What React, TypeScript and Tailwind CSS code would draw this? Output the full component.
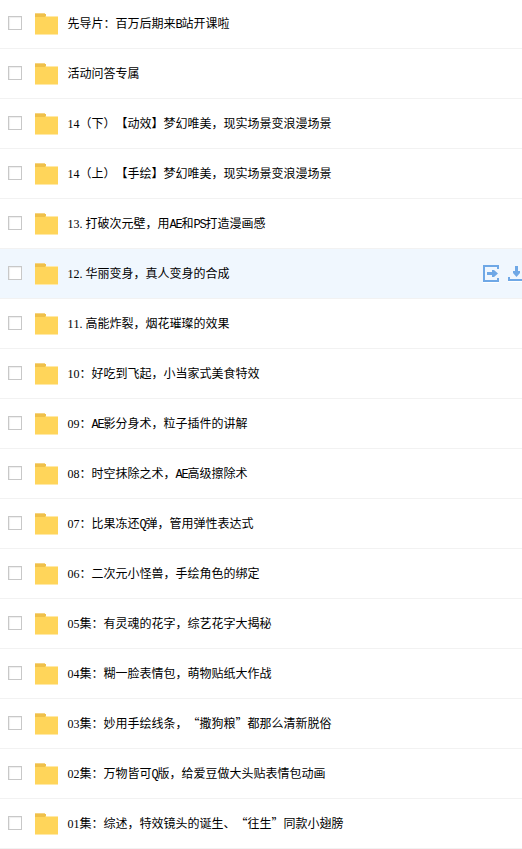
import clsx from 'clsx'

const files = [
    '先导片：百万后期来B站开课啦',
    '活动问答专属',
    '14（下）【动效】梦幻唯美，现实场景变浪漫场景',
    '14（上）【手绘】梦幻唯美，现实场景变浪漫场景',
    '13.打破次元壁，用AE和PS打造漫画感',
    '12.华丽变身，真人变身的合成',
    '11.高能炸裂，烟花璀璨的效果',
    '10：好吃到飞起，小当家式美食特效',
    '09：AE影分身术，粒子插件的讲解',
    '08：时空抹除之术，AE高级擦除术',
    '07：比果冻还Q弹，管用弹性表达式',
    '06：二次元小怪兽，手绘角色的绑定',
    '05集：有灵魂的花字，综艺花字大揭秘',
    '04集：糊一脸表情包，萌物贴纸大作战',
    '03集：妙用手绘线条，“撒狗粮”都那么清新脱俗',
    '02集：万物皆可Q版，给爱豆做大头贴表情包动画',
    '01集：综述，特效镜头的诞生、“往生”同款小翅膀',
]

const hoveredIndex = 5

function FolderIcon() {
    return (
        <svg className="ml-[13px] mt-[13px] h-[22px] w-[23px] shrink-0" viewBox="0 0 23 22" shapeRendering="crispEdges">
            <path d="M0 0h10v1h1v3H0z" fill="#efc04a" />
            <path d="M0 0h10v1H0z" fill="#f5d382" />
            <path d="M0 4h9l1-1h13v18H0z" fill="#ffd55a" />
            <path d="M11 3h12v1H11zM0 21h23v1H0z" fill="#ffe9a8" />
        </svg>
    )
}

function ShareIcon() {
    return (
        <svg className="h-[18px] w-[17px] shrink-0" viewBox="0 0 17 18" fill="none">
            <path d="M0 17.500h16" stroke="#fff" />
            <path d="M15 4V1H1v15h14v-3" stroke="#6fa8e6" strokeWidth="2" />
            <path d="M4 7h5V5h2l4 3.500-4 3.500H9v-2H4z" fill="#6fa8e6" />
        </svg>
    )
}

function DownloadIcon() {
    return (
        <svg className="h-[18px] w-[18px] shrink-0" viewBox="0 0 18 18" fill="none">
            <path d="M0 16.500h18" stroke="#fff" />
            <path d="M1 12v3h16v-3" stroke="#6fa8e6" strokeWidth="2" />
            <path d="M7 1h3v5h2v2l-3.500 4L5 8V6h2z" fill="#6fa8e6" />
        </svg>
    )
}

// Latin letters, digits and dots take half the width of a Chinese character
function FileName({ name }: { name: string }) {
    return (
        <span className="ml-[9.5px] flex-1 whitespace-nowrap pt-[14px] text-[12px] leading-[18px]">
            {name.split(/([0-9]+|[A-Z]+|\.)/).map((part, i) => {
                if (/^[0-9]/.test(part)) {
                    return <span key={i} className="font-['Liberation_Serif',serif]">{part}</span>
                }
                if (/^[A-Z]/.test(part)) {
                    return <span key={i} className="font-['Liberation_Mono',monospace] tracking-[-1.2px]">{part}</span>
                }
                if (part === '.') {
                    return <span key={i} className="font-['Liberation_Serif',serif] tracking-[3px]">.</span>
                }
                return part
            })}
        </span>
    )
}

export default function App() {
    return (
        <ul className="h-[849px] w-[522px] overflow-hidden bg-white font-['Noto_Sans_CJK_SC',sans-serif] text-black [font-kerning:none] [text-spacing-trim:space-all]">
            {files.map((name, i) => (
                <li
                    key={name}
                    className={clsx(
                        'flex h-[50px] items-start overflow-hidden border-b border-[#f2f2f2] pl-2 first:h-[49px] not-first:pt-px',
                        i === hoveredIndex && 'bg-[#f0f7fe]'
                    )}
                >
                    <span className="mt-4 size-3.5 shrink-0 border border-[#c8c8c8] bg-white shadow-[inset_1px_1px_1px_#eee]" />
                    <FolderIcon />
                    <FileName name={name} />
                    {i === hoveredIndex && (
                        <div className="mr-[-4px] flex gap-2 pt-[15px]">
                            <ShareIcon />
                            <DownloadIcon />
                        </div>
                    )}
                </li>
            ))}
        </ul>
    )
}
